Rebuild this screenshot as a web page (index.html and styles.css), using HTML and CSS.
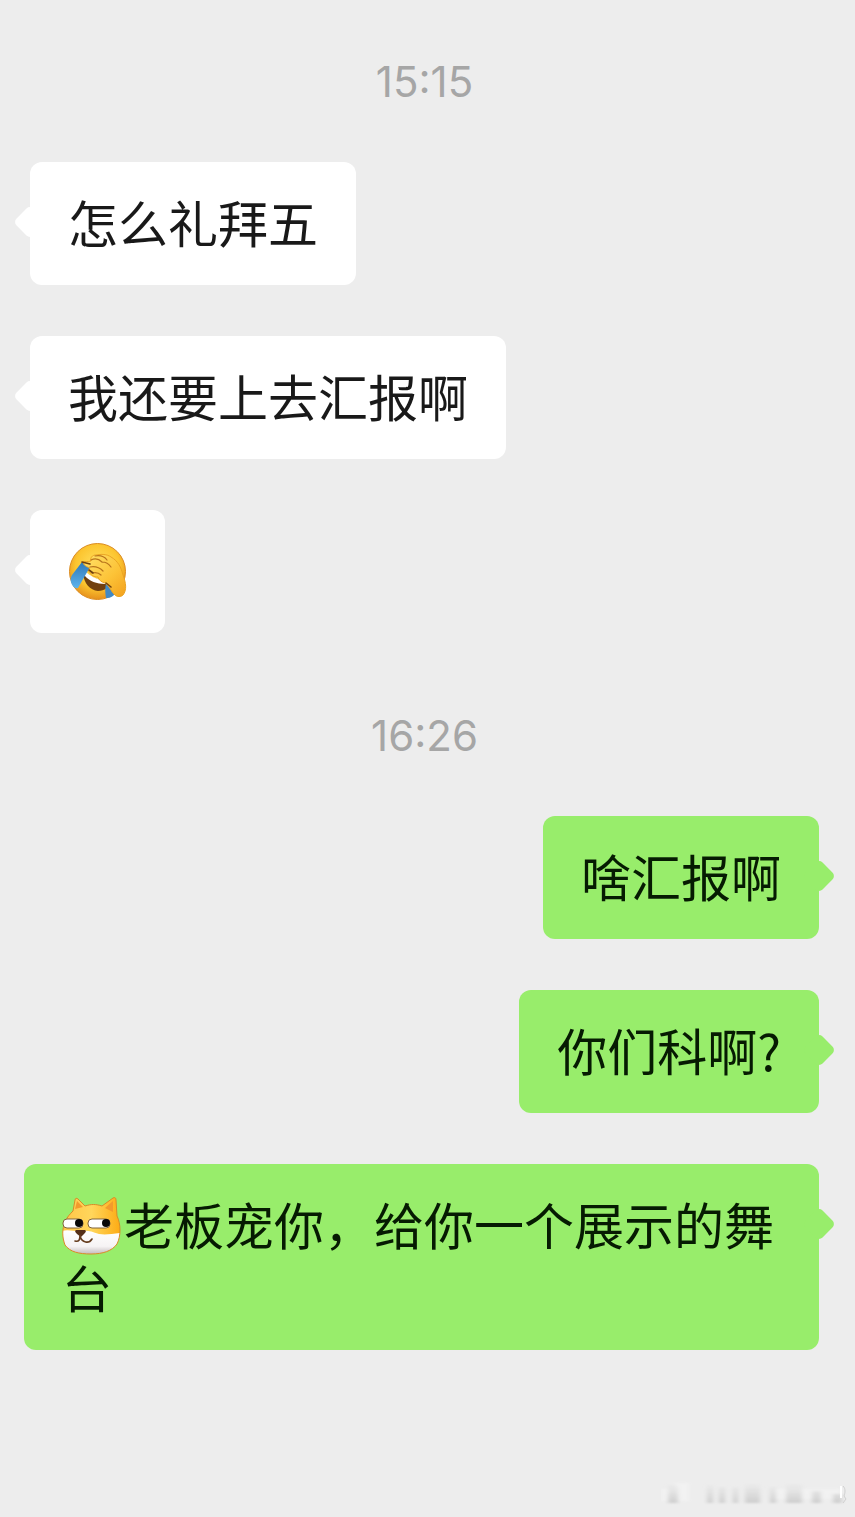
FILE: index.html
```html
<!DOCTYPE html>
<html lang="zh-CN">

<head>
  <meta charset="UTF-8">
  <meta name="viewport" content="width=device-width, initial-scale=1.0">
  <title>聊天记录</title>
  <link rel="stylesheet" href="styles.css">
</head>

<body>
  <main class="chat">
    <time class="chat-time">15:15</time>
    <p class="bubble">怎么礼拜五</p>
    <p class="bubble">我还要上去汇报啊</p>
    <p class="bubble">
      <svg class="emoji" viewBox="0 0 59 59" role="img" aria-label="捂脸">
        <defs>
          <radialGradient id="face" cx=".5" cy=".4" r=".6">
            <stop offset="0" stop-color="#ffe264" />
            <stop offset=".65" stop-color="#fcc52f" />
            <stop offset="1" stop-color="#e6901c" />
          </radialGradient>
          <linearGradient id="hand" x1="0" y1="0" x2="1" y2="1">
            <stop offset="0" stop-color="#ffe26a" />
            <stop offset=".6" stop-color="#fcc236" />
            <stop offset="1" stop-color="#f3a01d" />
          </linearGradient>
          <linearGradient id="tear" x1="0" y1="0" x2="0" y2="1">
            <stop offset="0" stop-color="#2f78b8" />
            <stop offset="1" stop-color="#5eb3ec" />
          </linearGradient>
        </defs>
        <circle cx="29.5" cy="29.5" r="28" fill="url(#face)" stroke="#dc8c20" />
        <path d="M15 31c6 3 15 7 25 9 1 5-3 9-10 9-8-1-14-7-15-18z" fill="#71400f" />
        <path d="M17 29c5 5 11 8 20 10v3c-8 0-16-3-20-8z" fill="#fff" />
        <path d="M14 20l8 5-12 21c-3 1-6-2-7-6-1-3 0-5 1-7z" fill="url(#tear)" />
        <path d="M38 41l6 6 2 6c-3 3-6 3-8 3-1-5-1-10 0-15z" fill="#4289c3" />
        <path d="M15 20c2-1 5 0 8-1-1-3 1-6 5-6 5-1 11-1 15 2 7 4 10 10 12 18 3 8 4 15 0 20-2 2-6 2-8 0-4-3-5-9-10-12-4-1-6-3-7-6-4 0-8-2-7-4-3 0-3-3-1-5-3-1-7-3-7-6z" fill="url(#hand)" stroke="#eba423" />
        <path d="M23 18c4-2 8-1 11 2M27 14c5-1 9 0 12 4M22 25c5-1 9 0 13 4M24 31c4-1 7 0 9 2M34 20c4 0 7 2 9 5" fill="none" stroke="#b8741c" stroke-width="1.2" stroke-linecap="round" />
        <path d="M14 20l8 2M21 28l4 3M38 41l5 4" fill="none" stroke="#6e400f" stroke-width="1.6" stroke-linecap="round" />
      </svg>
    </p>

    <time class="chat-time chat-time-later">16:26</time>
    <p class="bubble bubble-mine">啥汇报啊</p>
    <p class="bubble bubble-mine">你们科啊?</p>
    <p class="bubble bubble-mine"><svg class="emoji emoji-lead" viewBox="0 0 59 59" role="img" aria-label="旺柴">
        <defs>
          <linearGradient id="fur" x1="0" y1="0" x2="1" y2="0">
            <stop offset="0" stop-color="#ffc548" />
            <stop offset=".5" stop-color="#ffd65b" />
            <stop offset="1" stop-color="#fdaa12" />
          </linearGradient>
          <linearGradient id="muzzle" x1="0" y1="0" x2="0" y2="1">
            <stop offset="0" stop-color="#fff" />
            <stop offset=".65" stop-color="#f6f3f4" />
            <stop offset="1" stop-color="#bdb4b7" />
          </linearGradient>
          <clipPath id="head">
            <path d="M11 15L13 4c0-2 2-2 3-1l7 7c6-2 11-2 17 0L51 2c2-1 3 0 3 2l1 16c4 8 4 20 0 28-5 7-14 10-26 10S8 56 3 49c-3-8-3-16 0-23 2-5 5-8 8-11z" />
          </clipPath>
        </defs>
        <g clip-path="url(#head)">
          <path d="M0 0h59v59H0z" fill="url(#fur)" />
          <path d="M0 35c7-2 13 1 18 0 7-1 11 0 19 3 6 1 13 0 22-1v22H0z" fill="url(#muzzle)" />
        </g>
        <path d="M11 15L13 4c0-2 2-2 3-1l7 7c6-2 11-2 17 0L51 2c2-1 3 0 3 2l1 16c4 8 4 20 0 28-5 7-14 10-26 10S8 56 3 49c-3-8-3-16 0-23 2-5 5-8 8-11z" fill="none" stroke="#d88b28" />
        <path d="M13 13l2-8 6 6zM43 12l8-7v11z" fill="#f39a2c" />
        <rect x="1" y="23" width="20" height="9" rx="4" fill="#fff" stroke="#80643a" />
        <rect x="26" y="23" width="22" height="9" rx="4" fill="#fff" stroke="#80643a" />
        <circle cx="17" cy="27" r="4" fill="#080808" />
        <circle cx="44" cy="27" r="4" fill="#080808" />
        <path d="M14 34h9c2 1 0 3-1 4l-3 3-4-3c-1-1-3-3-1-4z" fill="#542f18" />
        <path d="M18 39c0 5-1 7-5 6M18 40c2 7 9 8 12 3" fill="none" stroke="#653c1e" stroke-width="1.6" stroke-linecap="round" />
      </svg>老板宠你，给你一个展示的舞台</p>

    <svg class="smudge" viewBox="0 0 190 34" aria-hidden="true">
      <defs>
        <linearGradient id="shade" x1="0" y1="0" x2="0" y2="1">
          <stop offset="0" stop-color="#d0d0d0" stop-opacity="0" />
          <stop offset="1" stop-color="#cecece" />
        </linearGradient>
        <filter id="soften">
          <feGaussianBlur stdDeviation="2 1" />
        </filter>
      </defs>
      <g filter="url(#soften)">
        <path d="M0 10h14V4h14v18H0zM112 10h67v10h-67z" fill="#f2f2f2" />
        <path d="M7 6h10v18H7zM46 6h6v18h-6zM58 8h6v16h-6zM72 8h5v16h-5zM84 4h15v20H84zM109 8h6v16h-6zM125 4h16v20h-16zM151 12h9v12h-9zM172 15h9v9h-9z" fill="url(#shade)" />
      </g>
      <path d="M180 7v12" fill="none" stroke="#fff" stroke-width="2" />
      <path d="M182 7c3 3 2 7 1 10l2 3-3 4" fill="none" stroke="#d0d0d0" />
    </svg>
  </main>
</body>

</html>
```
FILE: styles.css
```css
html {
  box-sizing: border-box;
}

*,
*:after,
*:before {
  box-sizing: inherit;
}

body {
  margin: 0;
  background-color: #ededed;
  color: #191919;
  font-family: "Noto Sans CJK SC", sans-serif;
  font-size: 50px;
  line-height: 63px;
}

.chat {
  display: flex;
  flex-direction: column;
  align-items: flex-start;
  gap: 51px;
  min-height: 100vh;
  padding: 53px 36px 4px 30px;
}

.chat-time {
  align-self: center;
  color: #a6a6a6;
  font-family: Inter, sans-serif;
  font-size: 42px;
  line-height: 58px;
}

.chat-time-later {
  margin-top: 23px;
}

.bubble {
  position: relative;
  max-width: 795px;
  margin: 0;
  padding: 28px 38px 32px;
  border-radius: 12px;
  background-color: #fff;
}

/* speech tail */
.bubble:before {
  content: "";
  position: absolute;
  top: 48px;
  left: -12px;
  width: 24px;
  height: 24px;
  border-radius: 5px;
  background-color: inherit;
  transform: rotate(45deg);
}

.bubble-mine {
  align-self: flex-end;
  margin-left: -6px;
  background-color: #98ed6b;
  color: #061b02;
}

.bubble-mine:before {
  right: -12px;
  left: auto;
}

.emoji {
  display: inline-block;
  width: 59px;
  height: 59px;
  margin: 4px 0 0;
  vertical-align: top;
}

.emoji-lead {
  margin-right: 3px;
}

.smudge {
  align-self: flex-end;
  width: 190px;
  height: 34px;
  margin-top: auto;
  margin-right: -32px;
}
```
